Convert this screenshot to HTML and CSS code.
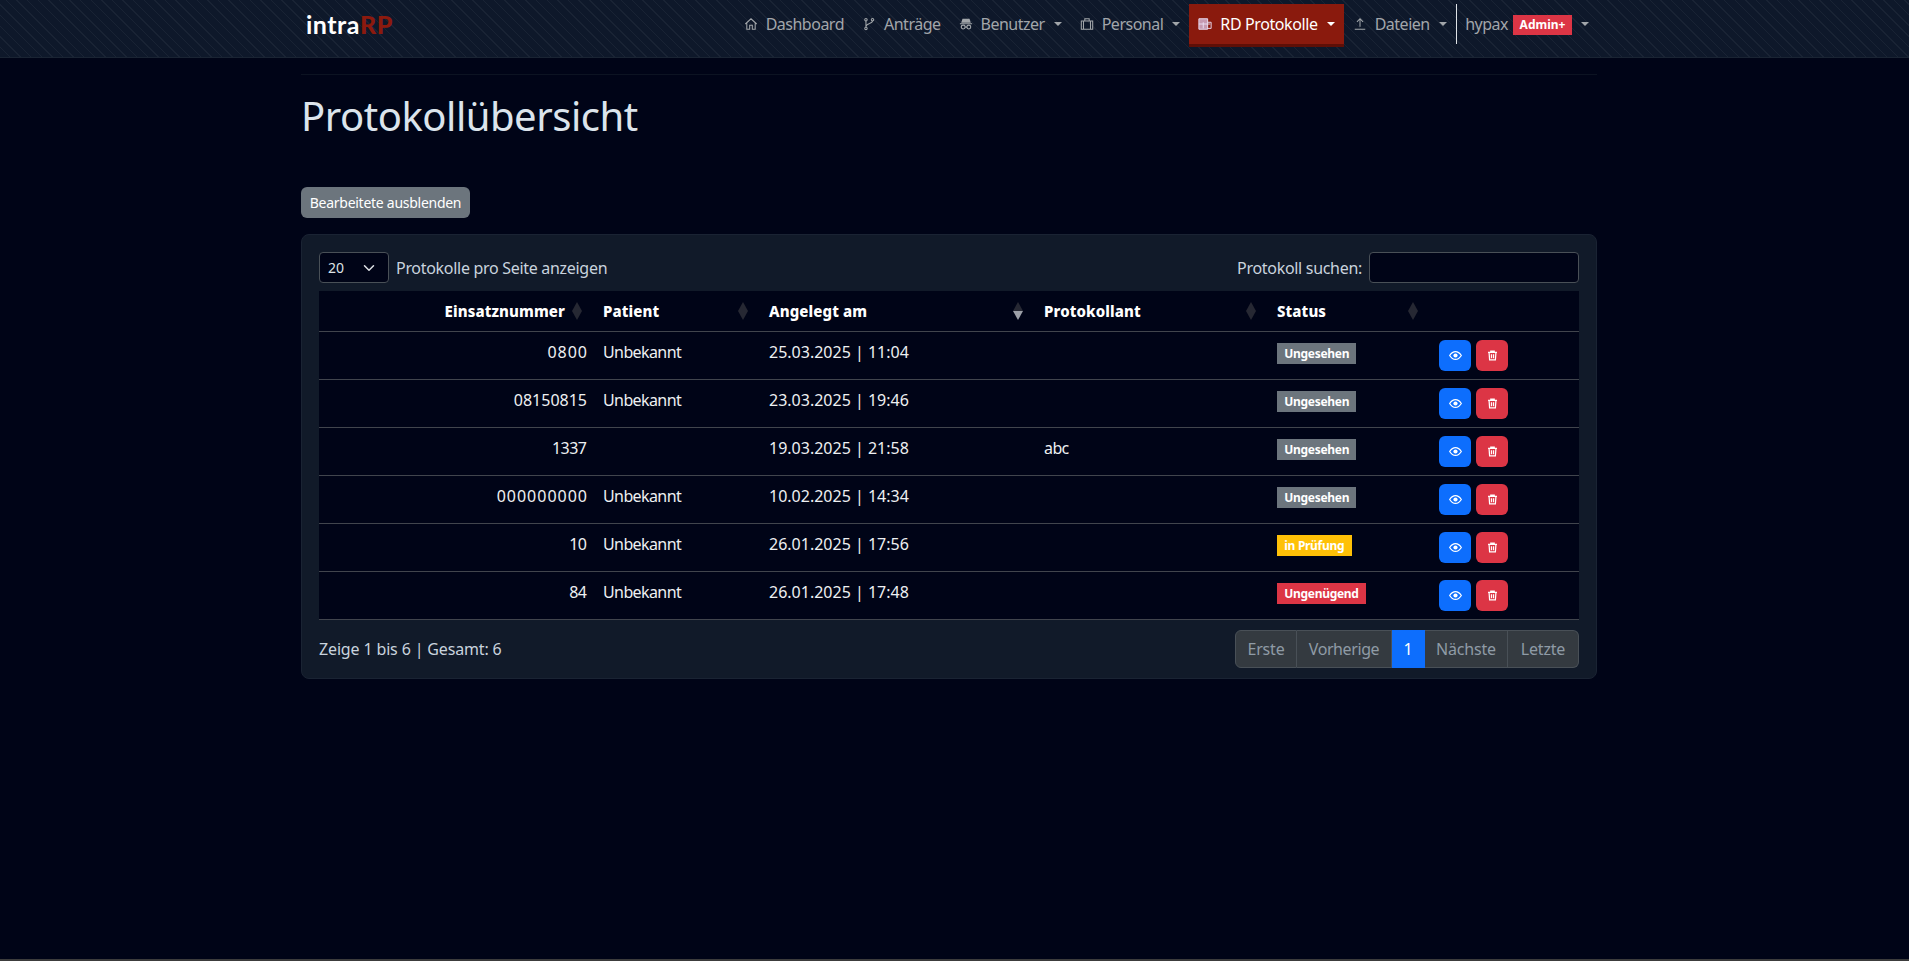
FILE: index.html
```html
<!DOCTYPE html>
<html lang="de">
<head>
<meta charset="utf-8">
<title>Protokollübersicht</title>
<link rel="stylesheet" href="styles.css">
</head>
<body>
<svg class="defs" width="0" height="0" aria-hidden="true">
  <symbol id="i-home" viewBox="0 0 16 16"><path d="M1.500 8 8 2l6.500 6M3.200 7v7h3.300v-4.500h3V14h3.300V7" fill="none" stroke="currentColor" stroke-width="1.200"/></symbol>
  <symbol id="i-fork" viewBox="0 0 16 16"><g fill="none" stroke="currentColor" stroke-width="1.200"><circle cx="4.500" cy="3" r="1.400"/><circle cx="4.500" cy="13" r="1.400"/><circle cx="12" cy="3" r="1.400"/><path d="M4.500 4.500v7M12 4.500C12 8 5 7 4.500 11"/></g></symbol>
  <symbol id="i-spy" viewBox="0 0 16 16"><path d="M4 2h8l1.500 4.500h-11zM1 7h14v1.200H1z" fill="currentColor"/><g fill="none" stroke="currentColor" stroke-width="1.300"><circle cx="4.800" cy="11.500" r="2.200"/><circle cx="11.200" cy="11.500" r="2.200"/><path d="M7 11.500h2"/></g></symbol>
  <symbol id="i-case" viewBox="0 0 16 16"><path d="M1.500 4.500h13v9.500h-13zM5.500 4.500V2h5v2.500M4 4.500V14M12 4.500V14" fill="none" stroke="currentColor" stroke-width="1.200"/></symbol>
  <symbol id="i-table" viewBox="0 0 16 16"><path d="M1 2h10v12H1z" fill="#d9c6e8" opacity=".75"/><path d="M1 2h10v12H1zM11 6h4v7h-4M1 8h13M6 6v7" fill="none" stroke="#e8dcf0" stroke-width="1.100"/></symbol>
  <symbol id="i-up" viewBox="0 0 16 16"><path d="M8 11V2M4.500 5.500 8 2l3.500 3.500M2 14h12" fill="none" stroke="currentColor" stroke-width="1.200"/></symbol>
  <symbol id="i-eye" viewBox="0 0 16 16"><path d="M.8 8C3 4.600 5.300 3.200 8 3.200S13 4.600 15.200 8C13 11.400 10.700 12.800 8 12.800S3 11.400.8 8Z" fill="none" stroke="currentColor" stroke-width="1.500"/><circle cx="8" cy="8" r="2.600" fill="currentColor"/></symbol>
  <symbol id="i-trash" viewBox="0 0 16 16"><path d="M1.500 3.500h13M5.500 3.500V1.500h5v2M3 3.500l.8 11h8.400l.8-11M6.500 6v6M9.500 6v6" fill="none" stroke="currentColor" stroke-width="1.800"/></symbol>
</svg>

<header class="navbar">
  <div class="nav-inner">
    <a class="brand">intra<span class="brand-rp">RP</span></a>
    <nav class="nav-list">
      <a class="nav-link"><svg class="nav-icon"><use href="#i-home"/></svg>Dashboard</a>
      <a class="nav-link"><svg class="nav-icon"><use href="#i-fork"/></svg>Anträge</a>
      <a class="nav-link caret"><svg class="nav-icon"><use href="#i-spy"/></svg>Benutzer</a>
      <a class="nav-link caret"><svg class="nav-icon"><use href="#i-case"/></svg>Personal</a>
      <a class="nav-link caret active"><svg class="nav-icon"><use href="#i-table"/></svg>RD Protokolle</a>
      <a class="nav-link caret"><svg class="nav-icon"><use href="#i-up"/></svg>Dateien</a>
      <a class="nav-link caret nav-user">hypax <span class="role-badge">Admin+</span></a>
    </nav>
  </div>
</header>

<main class="container">
  <hr class="rule">
  <h1 class="title">Protokollübersicht</h1>
  <button class="btn-toggle" type="button">Bearbeitete ausblenden</button>

  <section class="card">
    <div class="card-top">
      <label class="len-label"><span class="fake-select">20<svg class="chev" viewBox="0 0 16 16"><path d="m2 5 6 6 6-6" fill="none" stroke="currentColor" stroke-width="2" stroke-linecap="round" stroke-linejoin="round"/></svg></span>Protokolle pro Seite anzeigen</label>
      <label class="search-label">Protokoll suchen:<span class="search-box"></span></label>
    </div>

    <table class="data">
      <colgroup>
        <col class="c1"><col class="c2"><col class="c3"><col class="c4"><col class="c5"><col class="c6">
      </colgroup>
      <thead>
        <tr>
          <th class="num sort">Einsatznummer</th>
          <th class="sort">Patient</th>
          <th class="sort sort-desc">Angelegt am</th>
          <th class="sort">Protokollant</th>
          <th class="sort">Status</th>
          <th></th>
        </tr>
      </thead>
      <tbody>
        <tr><td class="num zeros">0800</td><td>Unbekannt</td><td class="date">25.03.2025 | 11:04</td><td></td><td><span class="badge grey">Ungesehen</span></td><td><span class="act blue"><svg class="ic-eye"><use href="#i-eye"/></svg></span><span class="act red"><svg class="ic-trash"><use href="#i-trash"/></svg></span></td></tr>
        <tr><td class="num">08150815</td><td>Unbekannt</td><td class="date">23.03.2025 | 19:46</td><td></td><td><span class="badge grey">Ungesehen</span></td><td><span class="act blue"><svg class="ic-eye"><use href="#i-eye"/></svg></span><span class="act red"><svg class="ic-trash"><use href="#i-trash"/></svg></span></td></tr>
        <tr><td class="num narrow">1337</td><td></td><td class="date">19.03.2025 | 21:58</td><td>abc</td><td><span class="badge grey">Ungesehen</span></td><td><span class="act blue"><svg class="ic-eye"><use href="#i-eye"/></svg></span><span class="act red"><svg class="ic-trash"><use href="#i-trash"/></svg></span></td></tr>
        <tr><td class="num zeros">000000000</td><td>Unbekannt</td><td class="date">10.02.2025 | 14:34</td><td></td><td><span class="badge grey">Ungesehen</span></td><td><span class="act blue"><svg class="ic-eye"><use href="#i-eye"/></svg></span><span class="act red"><svg class="ic-trash"><use href="#i-trash"/></svg></span></td></tr>
        <tr><td class="num narrow">10</td><td>Unbekannt</td><td class="date">26.01.2025 | 17:56</td><td></td><td><span class="badge yellow">in Prüfung</span></td><td><span class="act blue"><svg class="ic-eye"><use href="#i-eye"/></svg></span><span class="act red"><svg class="ic-trash"><use href="#i-trash"/></svg></span></td></tr>
        <tr><td class="num narrow">84</td><td>Unbekannt</td><td class="date">26.01.2025 | 17:48</td><td></td><td><span class="badge red">Ungenügend</span></td><td><span class="act blue"><svg class="ic-eye"><use href="#i-eye"/></svg></span><span class="act red"><svg class="ic-trash"><use href="#i-trash"/></svg></span></td></tr>
      </tbody>
    </table>

    <div class="card-bottom">
      <span class="info">Zeige 1 bis 6 | Gesamt: 6</span>
      <div class="pager">
        <a class="pg pg-1">Erste</a><a class="pg pg-2">Vorherige</a><a class="pg pg-3 current">1</a><a class="pg pg-4">Nächste</a><a class="pg pg-5">Letzte</a>
      </div>
    </div>
  </section>
</main>
<div class="bottom-line"></div>
</body>
</html>
```

FILE: styles.css
```css
* { box-sizing: border-box; }
html, body { margin: 0; height: 100%; }
body {
  background: #000417;
  color: #dee2e6;
  font-family: "Noto Sans", "Liberation Sans", sans-serif;
  font-size: 16px;
  overflow: hidden;
  position: relative;
}
.defs { position: absolute; }

.navbar {
  width: 100%;
  height: 58px;
  border-bottom: 1px solid #1a2433;
  background-color: #0e182a;
  background-image: repeating-linear-gradient(45deg, transparent 0 6.500px, #192334 6.500px 7.500px);
}
.nav-inner {
  width: 1320px;
  margin-left: 289px;
  padding: 4px 12px 0 17px;
  display: flex;
  align-items: flex-start;
  justify-content: space-between;
}
.brand {
  font-family: "Lato", sans-serif;
  font-size: 25px;
  font-weight: 700;
  letter-spacing: .5px;
  color: #fff;
  line-height: 41px;
}
.brand-rp { color: #8c1a0e; font-weight: 900; }
.nav-list { display: flex; align-items: flex-start; }
.nav-link {
  display: flex;
  align-items: center;
  height: 43px;
  padding: 0 9px 3px;
  color: #a2a6aa;
  font-size: 16px;
  letter-spacing: -.5px;
  white-space: nowrap;
}
.nav-icon { width: 14px; height: 14px; margin-right: 8px; flex: none; }
.caret::after {
  content: "";
  margin-left: 9px;
  border-top: 4.800px solid currentColor;
  border-left: 4.800px solid transparent;
  border-right: 4.800px solid transparent;
}
.active {
  background: #8a1a0d;
  border-bottom: 3px solid #5e0f07;
  color: #fff;
  padding-bottom: 0;
  letter-spacing: -.39px;
}
.nav-user {
  border-left: 1px solid #dee2e6;
  height: 40px;
  padding: 0 8px 0 8.500px;
}
.role-badge {
  background: #dc3545;
  color: #fff;
  font-size: 12px;
  font-weight: 700;
  letter-spacing: 0;
  width: 59px;
  height: 20px;
  line-height: 20px;
  text-align: center;
  margin-left: 5px;
  margin-top: 2px;
}

.container { width: 1320px; margin-left: 289px; padding: 0 12px; }
.rule { margin: 16px 0 0; border: 0; border-top: 1px solid #0c1322; }
.title {
  margin: 0;
  padding-top: 17px;
  height: 112px;
  font-size: 40px;
  font-weight: 400;
  line-height: 48px;
  letter-spacing: -.47px;
  color: #dce4ec;
}
.btn-toggle {
  display: block;
  width: 169px;
  height: 31px;
  padding: 0;
  border: 0;
  border-radius: 6px;
  background: #6c757d;
  color: #fff;
  font: inherit;
  font-size: 14px;
  letter-spacing: -.27px;
}
.card {
  margin-top: 16px;
  height: 445px;
  padding: 17px 17px 0;
  background: #111a29;
  border: 1px solid #1a2333;
  border-radius: 8px;
}
.card-top {
  display: flex;
  justify-content: space-between;
  align-items: center;
  height: 31px;
  margin-bottom: 8px;
}
.len-label, .search-label { display: flex; align-items: center; color: #c9d3de; letter-spacing: -.3px; }
.fake-select {
  display: flex;
  align-items: center;
  justify-content: space-between;
  width: 70px;
  height: 31px;
  padding: 0 13px 0 8px;
  margin-right: 7px;
  background: #000417;
  border: 1px solid #495057;
  border-radius: 4px;
  font-size: 14px;
  letter-spacing: 0;
  color: #dee2e6;
}
.chev { width: 12px; height: 12px; }
.search-box {
  width: 210px;
  height: 31px;
  margin-left: 7px;
  background: #000417;
  border: 1px solid #495057;
  border-radius: 4px;
}

.data { width: 1260px; border-collapse: collapse; table-layout: fixed; background: #000417; }
.c1 { width: 276px; }
.c2 { width: 166px; }
.c3 { width: 275px; }
.c4 { width: 233px; }
.c5 { width: 162px; }
.c6 { width: 148px; }
th, td { padding: 0 8px; text-align: left; border-bottom: 1px solid #41454d; }
th { height: 40px; color: #fff; font-weight: 800; font-size: 15px; letter-spacing: .1px; padding-right: 26px; position: relative; }
th.num { text-align: right; padding-right: 30px; }
td { height: 48px; color: #eef0f2; font-size: 16px; letter-spacing: -.6px; line-height: 20px; vertical-align: top; padding-top: 10px; }
td.num { text-align: right; letter-spacing: 0; }
td.zeros { letter-spacing: 1px; padding-right: 7px; }
td.narrow { letter-spacing: -.5px; padding-right: 8.500px; }
td.date { letter-spacing: 0; }
.sort::after {
  content: "";
  position: absolute;
  right: 13px;
  top: 11px;
  width: 10px;
  height: 18px;
  background: #262833;
  clip-path: polygon(50% 0, 100% 50%, 50% 100%, 0 50%);
}
.sort-desc::after {
  background: linear-gradient(#262833 50%, #9ca0a8 50%);
}
.badge {
  display: inline-block;
  vertical-align: top;
  height: 21px;
  line-height: 21px;
  padding: 0 7.300px;
  margin-top: 1px;
  font-size: 12px;
  font-weight: 700;
  letter-spacing: -.3px;
  color: #fff;
}
.grey { background: #6c757d; }
.yellow { background: #ffc107; }
.red { background: #dc3545; }
.act {
  display: inline-flex;
  vertical-align: top;
  align-items: center;
  justify-content: center;
  width: 32px;
  height: 31px;
  margin-top: -2px;
  margin-right: 5px;
  border-radius: 6px;
  color: #fff;
}
.ic-eye { width: 13px; height: 13px; }
.ic-trash { width: 11px; height: 11px; }
.blue { background: #0d6efd; }

.card-bottom {
  display: flex;
  justify-content: space-between;
  align-items: center;
  margin-top: 10px;
  height: 38px;
}
.info { color: #c9d3de; letter-spacing: -.15px; }
.pager { display: flex; height: 38px; letter-spacing: -.2px; }
.pg {
  display: flex;
  align-items: center;
  justify-content: center;
  background: #343a40;
  color: #8f9ba6;
  border: 1px solid #495057;
  border-left-width: 0;
}
.pg-1 { width: 62px; border-left-width: 1px; border-radius: 6px 0 0 6px; }
.pg-2 { width: 95px; letter-spacing: -.4px; }
.pg-3 { width: 33px; }
.pg-4 { width: 83px; }
.pg-5 { width: 71px; border-radius: 0 6px 6px 0; }
.current { background: #0d6efd; border-color: #0d6efd; color: #fff; }
.bottom-line {
  position: absolute;
  left: 0;
  right: 0;
  bottom: 0;
  height: 2px;
  background: #3c3c3c;
}
```
